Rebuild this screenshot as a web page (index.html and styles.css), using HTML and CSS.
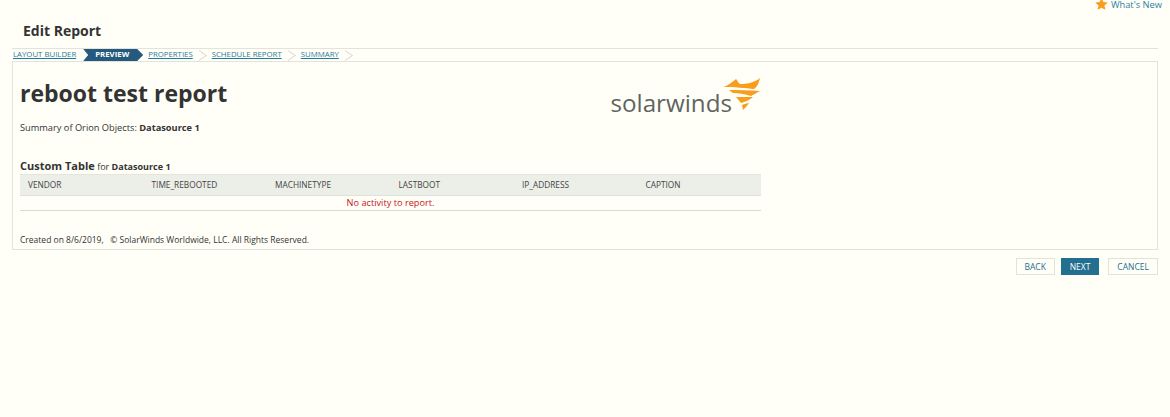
FILE: index.html
```html
<!DOCTYPE html>
<html lang="en">
<head>
<meta charset="utf-8">
<title>Edit Report</title>
<link rel="stylesheet" href="styles.css">
</head>
<body>
<div class="top">
  <svg class="star" width="13" height="12" viewBox="0 0 24 23"><path d="M12 0l3.6 7.6 8.4 1.1-6.2 5.7 1.6 8.3L12 18.6 4.6 22.7l1.6-8.3L0 8.7l8.4-1.1z" fill="#f99d1c"/></svg>
  <a class="new">What's New</a>
</div>
<h1 class="title">Edit Report</h1>
<nav class="steps">
  <a class="step">LAYOUT BUILDER</a>
  <span class="current">PREVIEW</span>
  <a class="step s2">PROPERTIES</a><span class="chev"></span>
  <a class="step">SCHEDULE REPORT</a><span class="chev"></span>
  <a class="step">SUMMARY</a><span class="chev"></span>
</nav>
<main class="panel">
  <div class="report">
    <header class="head">
      <div>
        <h2 class="name">reboot test report</h2>
        <p class="sub">Summary of Orion Objects: <b>Datasource 1</b></p>
      </div>
      <div class="logo">
        <span class="word">solarwinds</span>
        <svg class="flame" width="38" height="34" viewBox="0 0 38 34">
          <path d="M0 9C5 8 9 4 13 1c2 2 2 4 4 5C23 6 31 5 37 0c-1 5-3 9-6 11-8-1-20-2-31-2z" fill="#f99d1c"/>
          <path d="M6 12c9 0 19 0 31 1-4 2-7 4-9 5-6-2-13-3-18-3z" fill="#f99d1c"/>
          <path d="M13 19c5 0 10 0 17 0-3 3-8 5-12 6z" fill="#f99d1c"/>
          <path d="M19 27c2-1 6-2 7-2-2 3-4 5-6 7z" fill="#f99d1c"/>
        </svg>
      </div>
    </header>
    <h3 class="thead"><b>Custom Table</b> <span>for</span> <b class="ds">Datasource 1</b></h3>
    <div class="grid cols">
      <span>VENDOR</span><span>TIME_REBOOTED</span><span>MACHINETYPE</span><span>LASTBOOT</span><span>IP_ADDRESS</span><span>CAPTION</span>
    </div>
    <div class="empty">No activity to report.</div>
    <p class="foot">Created on 8/6/2019, &nbsp; © SolarWinds Worldwide, LLC. All Rights Reserved.</p>
  </div>
</main>
<div class="actions">
  <a class="btn back">BACK</a>
  <a class="btn primary">NEXT</a>
  <a class="btn">CANCEL</a>
</div>
</body>
</html>
```
FILE: styles.css
```css
* { box-sizing: border-box; }
html, body { margin: 0; height: 100%; }
body {
  background: #fffff8;
  font-family: "Open Sans", sans-serif;
  color: #333;
  overflow: hidden;
}
.top {
  height: 10px;
  display: flex;
  justify-content: flex-end;
  align-items: center;
  padding-right: 8px;
  gap: 3px;
}
.star { margin-top: -2px; }
.new { font-size: 9.3px; color: #2a7fa5; line-height: 10px; }
.title {
  margin: 12px 0 0 23px;
  font-size: 14px;
  line-height: 18px;
  height: 26px;
  font-weight: 700;
  color: #333;
}
.steps {
  margin-left: 12px;
  margin-right: 12px;
  height: 13px;
  border-top: 1px solid #e3e3dc;
  display: flex;
  align-items: center;
  font-size: 7.8px;
  padding-left: 1px;
}
.step { color: #1f7a9c; text-decoration: underline; white-space: nowrap; margin-bottom: 2px; }
.s2 { margin-left: 5px; }
.current {
  margin-left: 7px;
  width: 60px;
  height: 12px;
  background: #235a7e;
  color: #fff;
  font-weight: 700;
  line-height: 11px;
  padding-left: 12px;
  clip-path: polygon(0 0, 54px 0, 100% 50%, 54px 100%, 0 100%, 5px 50%);
}
.chev {
  width: 9px;
  height: 9px;
  border-top: 1px solid #d8d8d0;
  border-right: 1px solid #d8d8d0;
  transform: rotate(45deg) skew(-10deg, -10deg);
  margin: 0 8px 0 2px;
}
.panel {
  margin: 0 12px;
  height: 189px;
  border: 1px solid #e3e3dc;
  padding: 0 7px;
}
.report { width: 741px; }
.head { display: flex; justify-content: space-between; height: 87px; }
.name {
  margin: 16px 0 0;
  font-size: 23px;
  line-height: 30px;
  font-weight: 700;
  color: #333;
}
.sub { margin: 13px 0 0; font-size: 9.25px; line-height: 13px; color: #333; }
.sub b { font-weight: 700; }
.logo { display: flex; align-items: flex-start; padding-top: 16px; }
.word { font-size: 24.2px; line-height: 30px; color: #5f6462; margin-top: 10px; }
.flame { margin-left: -9px; }
.thead { margin: 10px 0 0; height: 15px; font-size: 9px; line-height: 13px; font-weight: 400; }
.thead b:first-child { font-size: 11px; }
.thead b { font-weight: 700; }
.grid {
  display: grid;
  grid-template-columns: repeat(6, 123.5px);
  height: 22px;
  background: #eceee8;
  border-top: 1px solid #e3e5df;
  border-bottom: 1px solid #dfe1db;
  font-size: 8.3px;
  line-height: 19px;
  color: #444;
}
.grid span { padding-left: 8px; }
.empty {
  height: 15px;
  border-bottom: 1px solid #d9dad4;
  text-align: center;
  font-size: 9.2px;
  line-height: 14px;
  color: #c8141e;
}
.foot { margin: 23px 0 0; font-size: 8.5px; line-height: 12px; color: #333; }
.actions {
  margin: 8px 12px 0 0;
  display: flex;
  justify-content: flex-end;
  gap: 9px;
}
.btn {
  height: 17px;
  min-width: 40px;
  padding: 0 8px;
  border: 1px solid #e3e3dc;
  font-size: 8.5px;
  line-height: 15px;
  text-align: center;
  color: #22708f;
  background: #fffff8;
}
.back { min-width: 39px; padding: 0 7px; }
.primary { background: #226f8f; border-color: #226f8f; color: #fff; min-width: 38px; margin-left: -3px; }
```
